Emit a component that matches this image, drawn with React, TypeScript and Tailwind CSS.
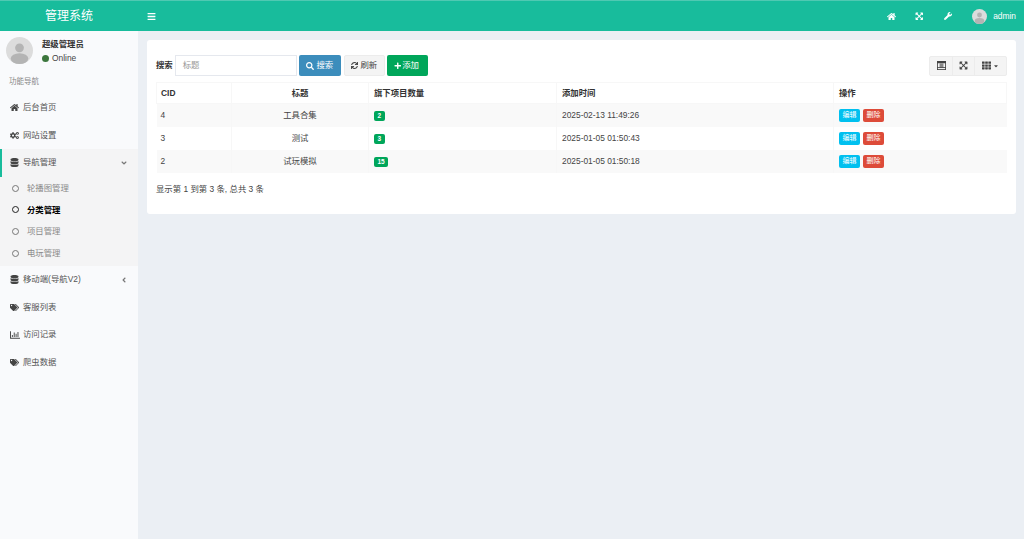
import React from "react";
import {
  FaAngleDown,
  FaAngleLeft,
  FaBars,
  FaCaretDown,
  FaCogs,
  FaDatabase,
  FaExpandArrowsAlt,
  FaHome,
  FaPlus,
  FaRegChartBar,
  FaSearch,
  FaSync,
  FaTags,
  FaTh,
  FaWrench,
} from "react-icons/fa";

const font = "font-['Liberation_Sans','Noto_Sans_CJK_SC',sans-serif]";

const Avatar = ({ className }: { className: string }) => (
  <svg viewBox="0 0 40 40" className={className}>
    <circle cx="20" cy="20" r="20" fill="#dcdcdc" />
    <circle cx="20" cy="16" r="6.5" fill="#b4b4b4" />
    <ellipse cx="20" cy="32" rx="13" ry="8" fill="#b4b4b4" />
  </svg>
);

const MenuItem = ({
  icon,
  label,
  arrow,
  active,
}: {
  icon: React.ReactNode;
  label: string;
  arrow?: React.ReactNode;
  active?: boolean;
}) => (
  <div
    className={`flex h-[27.5px] items-center pr-[10px] text-[#555] ${
      active ? "border-l-2 border-[#18bc9c] bg-[#f4f4f5] pl-[6px] text-[#444]" : "pl-[8px]"
    }`}
  >
    <span className="flex w-[13px] justify-center text-[9px] text-[#444]">{icon}</span>
    <span className="ml-[2px] flex-1">{label}</span>
    {arrow}
  </div>
);

const SubItem = ({ label, active }: { label: string; active?: boolean }) => (
  <div
    className={`flex h-[21.6px] items-center pl-[12px] ${
      active ? "font-bold text-black" : "text-[#8a8a8a]"
    }`}
  >
    <span
      className={`h-[7px] w-[7px] rounded-full border ${
        active ? "border-[1.5px] border-[#222]" : "border-[#777]"
      }`}
    />
    <span className="ml-[8px]">{label}</span>
  </div>
);

const Sidebar = () => (
  <aside className="w-[138px] shrink-0 bg-[#f9fafc]">
    <div className="flex h-[40px] items-start pl-[6px] pt-[6px]">
      <Avatar className="h-[27px] w-[27px]" />
      <div className="ml-[9px]">
        <p className="mt-[2px] font-bold leading-[11px] text-[#333]">超级管理员</p>
        <p className="mt-[3px] flex items-center leading-[11px] text-[#444]">
          <span className="mr-[3px] h-[7px] w-[7px] rounded-full bg-[#3c763d]" />
          Online
        </p>
      </div>
    </div>
    <p className="flex h-[22px] items-center pl-[9px] text-[7.5px] text-[#888]">功能导航</p>
    <div className="mt-[1px]">
      <MenuItem icon={<FaHome />} label="后台首页" />
      <MenuItem icon={<FaCogs />} label="网站设置" />
      <MenuItem icon={<FaDatabase />} label="导航管理" active arrow={<FaAngleDown className="text-[8px] text-[#777]" />} />
      <div className="bg-[#f4f4f5] pb-[2px] pt-[1px]">
        <SubItem label="轮播图管理" />
        <SubItem label="分类管理" active />
        <SubItem label="项目管理" />
        <SubItem label="电玩管理" />
      </div>
      <MenuItem icon={<FaDatabase />} label="移动端(导航V2)" arrow={<FaAngleLeft className="text-[8px] text-[#777]" />} />
      <MenuItem icon={<FaTags />} label="客服列表" />
      <MenuItem icon={<FaRegChartBar className="text-[10px]" />} label="访问记录" />
      <MenuItem icon={<FaTags />} label="爬虫数据" />
    </div>
  </aside>
);

const rows = [
  { id: 4, title: "工具合集", count: 2, time: "2025-02-13 11:49:26" },
  { id: 3, title: "测试", count: 3, time: "2025-01-05 01:50:43" },
  { id: 2, title: "试玩模拟", count: 15, time: "2025-01-05 01:50:18" },
];

const Toolbar = () => (
  <div className="flex h-[21px] items-center">
    <span className="mr-[2px] font-bold text-[#333]">搜索</span>
    <div className="flex h-[21px] w-[122px] items-center border border-[#e5e8ee] pl-[7px] text-[#999]">标题</div>
    <button className="ml-[2px] flex h-[21px] w-[42px] items-center justify-center gap-[2px] rounded-[2px] bg-[#3c8dbc] text-white">
      <FaSearch className="text-[8px]" />
      搜索
    </button>
    <button className="ml-[3px] flex h-[21px] w-[41px] items-center justify-center gap-[2px] rounded-[2px] border border-[#ececec] bg-[#f4f4f4] text-[#444]">
      <FaSync className="text-[7px]" />
      刷新
    </button>
    <button className="ml-[2px] flex h-[21px] w-[41px] items-center justify-center gap-[1px] rounded-[2px] bg-[#00a65a] pr-[2px] text-white">
      <FaPlus className="text-[7.5px]" />
      添加
    </button>
    <div className="ml-auto flex h-[20px] rounded-[2px] border border-[#ececec] bg-[#f4f4f4] text-[#444]">
      <span className="flex w-[23px] items-center justify-center border-r border-[#ececec]">
        <svg viewBox="0 0 16 16" className="h-[9px] w-[9px]">
          <rect x="0.75" y="0.75" width="14.5" height="14.5" fill="none" stroke="#444" strokeWidth="1.5" />
          <rect x="0" y="0" width="16" height="4" fill="#444" />
          <rect x="4.5" y="4" width="7" height="8" fill="#888" />
          <rect x="0" y="11" width="16" height="1.5" fill="#444" />
        </svg>
      </span>
      <span className="flex w-[22px] items-center justify-center border-r border-[#ececec]">
        <FaExpandArrowsAlt className="text-[9px]" />
      </span>
      <span className="flex w-[31px] items-center justify-center gap-[2px]">
        <FaTh className="text-[9px]" />
        <FaCaretDown className="text-[6px]" />
      </span>
    </div>
  </div>
);

const Table = () => (
  <table className="mt-[6px] w-full table-fixed border-collapse text-[#444]">
    <colgroup>
      <col className="w-[75px]" />
      <col className="w-[137px]" />
      <col className="w-[188px]" />
      <col className="w-[277px]" />
      <col />
    </colgroup>
    <thead>
      <tr className="h-[21px] border-y border-[#f7f7f7] font-bold text-[#333]">
        <th className="border-x border-[#f7f7f7] pl-[4px] text-left">CID</th>
        <th className="border-r border-[#f7f7f7] text-center">标题</th>
        <th className="border-r border-[#f7f7f7] pl-[5px] text-left">旗下项目数量</th>
        <th className="border-r border-[#f7f7f7] pl-[5px] text-left">添加时间</th>
        <th className="border-r border-[#f7f7f7] pl-[5px] text-left">操作</th>
      </tr>
    </thead>
    <tbody>
      {rows.map((row, i) => (
        <tr key={row.id} className={`h-[23px] ${i % 2 === 0 ? "bg-[#f9f9f9]" : "bg-white"}`}>
          <td className="pl-[4px]">{row.id}</td>
          <td className="border-l border-[#f7f7f7] text-center">{row.title}</td>
          <td className="border-l border-[#f7f7f7] pl-[5px]">
            <span className="inline-flex h-[10px] items-center rounded-[2px] bg-[#00a65a] px-[3.5px] text-[6.5px] font-bold leading-none text-white">
              {row.count}
            </span>
          </td>
          <td className="border-l border-[#f7f7f7] pl-[5px]">{row.time}</td>
          <td className="border-l border-[#f7f7f7] pl-[5px]">
            <div className="flex gap-[3px]">
              <span className="flex h-[13px] w-[21px] items-center justify-center rounded-[2px] bg-[#00c0ef] text-[7px] text-white">
                编辑
              </span>
              <span className="flex h-[13px] w-[21px] items-center justify-center rounded-[2px] bg-[#dd4b39] text-[7px] text-white">
                删除
              </span>
            </div>
          </td>
        </tr>
      ))}
    </tbody>
  </table>
);

const App = () => (
  <div className={`${font} flex h-[539px] w-[1024px] flex-col overflow-hidden bg-[#ebeff4] text-[8.4px]`}>
    <header className="flex h-[31px] shrink-0 items-center border-t border-[#4fc9b2] bg-[#18bc9c] text-white">
      <div className="w-[138px] text-center text-[12px]">管理系统</div>
      <FaBars className="ml-[9px] text-[9px]" />
      <div className="ml-auto flex items-center">
        <FaHome className="text-[9px]" />
        <FaExpandArrowsAlt className="ml-[19.5px] text-[8.5px]" />
        <FaWrench className="ml-[20px] text-[8px]" />
        <Avatar className="ml-[20.5px] h-[15px] w-[15px]" />
        <span className="ml-[6px] mr-[8px]">admin</span>
      </div>
    </header>
    <div className="flex flex-1">
      <Sidebar />
      <main className="flex-1 pl-[9px] pr-[8px] pt-[9px]">
        <div className="h-[174px] rounded-[3px] bg-white px-[9px] pt-[15px]">
          <Toolbar />
          <Table />
          <p className="mt-[10px] text-[#444]">显示第 1 到第 3 条, 总共 3 条</p>
        </div>
      </main>
    </div>
  </div>
);

export default App;
